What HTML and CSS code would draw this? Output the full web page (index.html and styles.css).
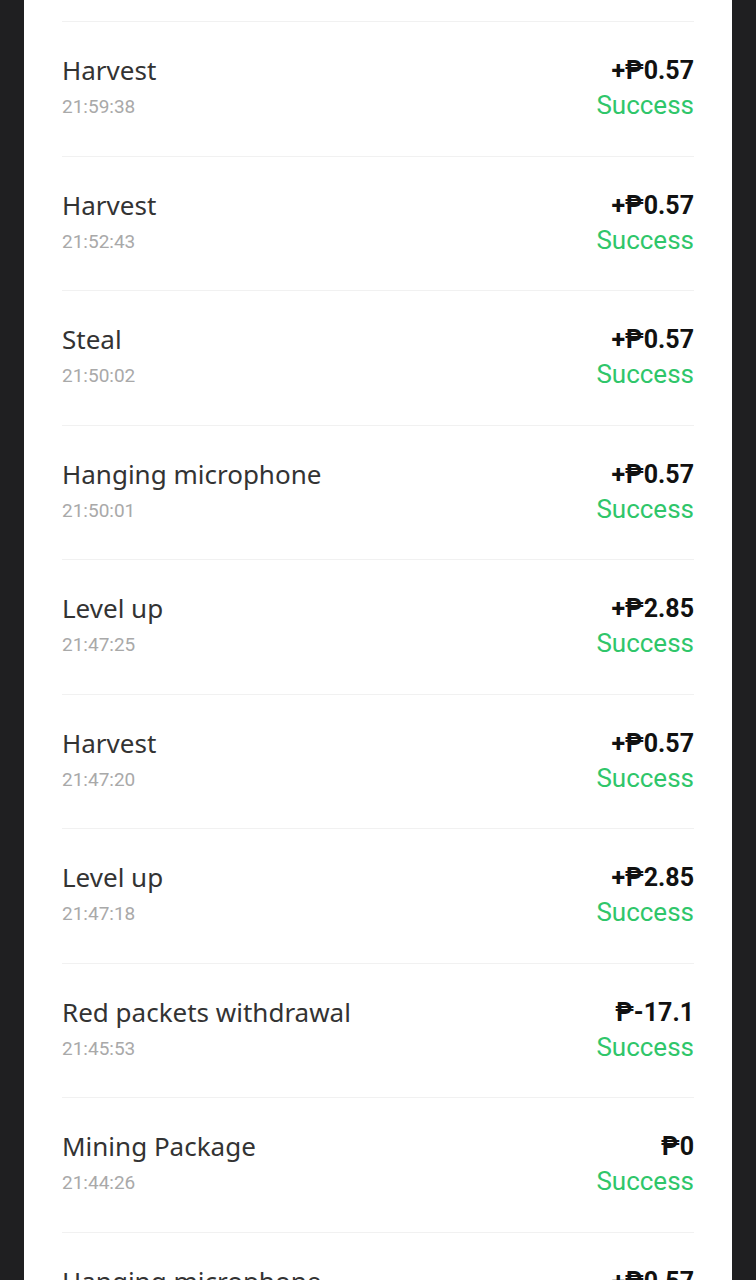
FILE: index.html
```html
<!DOCTYPE html>
<html>
	<head>
		<meta charset="utf-8">
		<link rel="stylesheet" href="styles.css">
	</head>
	<body>
		<div class="panel">
			<div class="records">
				<div class="record">
					<div class="info"><div class="title">Harvest</div><div class="time">21:59:38</div></div>
					<div class="result"><div class="amount">+₱0.57</div><div class="status">Success</div></div>
				</div>
				<div class="record">
					<div class="info"><div class="title">Harvest</div><div class="time">21:52:43</div></div>
					<div class="result"><div class="amount">+₱0.57</div><div class="status">Success</div></div>
				</div>
				<div class="record">
					<div class="info"><div class="title">Steal</div><div class="time">21:50:02</div></div>
					<div class="result"><div class="amount">+₱0.57</div><div class="status">Success</div></div>
				</div>
				<div class="record">
					<div class="info"><div class="title">Hanging microphone</div><div class="time">21:50:01</div></div>
					<div class="result"><div class="amount">+₱0.57</div><div class="status">Success</div></div>
				</div>
				<div class="record">
					<div class="info"><div class="title">Level up</div><div class="time">21:47:25</div></div>
					<div class="result"><div class="amount">+₱2.85</div><div class="status">Success</div></div>
				</div>
				<div class="record">
					<div class="info"><div class="title">Harvest</div><div class="time">21:47:20</div></div>
					<div class="result"><div class="amount">+₱0.57</div><div class="status">Success</div></div>
				</div>
				<div class="record">
					<div class="info"><div class="title">Level up</div><div class="time">21:47:18</div></div>
					<div class="result"><div class="amount">+₱2.85</div><div class="status">Success</div></div>
				</div>
				<div class="record">
					<div class="info"><div class="title">Red packets withdrawal</div><div class="time">21:45:53</div></div>
					<div class="result"><div class="amount">₱-17.1</div><div class="status">Success</div></div>
				</div>
				<div class="record">
					<div class="info"><div class="title">Mining Package</div><div class="time">21:44:26</div></div>
					<div class="result"><div class="amount">₱0</div><div class="status">Success</div></div>
				</div>
				<div class="record">
					<div class="info"><div class="title">Hanging microphone</div><div class="time">21:43:10</div></div>
					<div class="result"><div class="amount">+₱0.57</div><div class="status">Success</div></div>
				</div>
			</div>
		</div>
	</body>
</html>
```

FILE: styles.css
```css
html, body {
	margin: 0;
	height: 100%;
	overflow: hidden;
}

body {
	background-color: #1f1f21;
	font-family: Roboto, "Noto Sans", sans-serif;
}

.panel {
	margin: 0 24px;
	height: 100%;
	background-color: #ffffff;
	overflow: hidden;
}

.records {
	padding: 21px 38px 0 38px;
}

.record {
	display: flex;
	justify-content: space-between;
	height: 134.56px;
	box-sizing: border-box;
	border-top: 1px solid #f1f1f1;
	padding-top: 30px;
}

.title {
	font-family: "Noto Sans", Roboto, sans-serif;
	font-size: 26px;
	line-height: 36px;
	color: #333333;
}

.time {
	margin-top: 6px;
	font-size: 19px;
	line-height: 26px;
	color: #a9a9a9;
}

.result {
	padding-top: 1px;
	text-align: right;
}

.amount {
	font-size: 25px;
	line-height: 36px;
	font-weight: bold;
	color: #111111;
}

.status {
	font-size: 26px;
	line-height: 32px;
	color: #2fc66a;
}
```
